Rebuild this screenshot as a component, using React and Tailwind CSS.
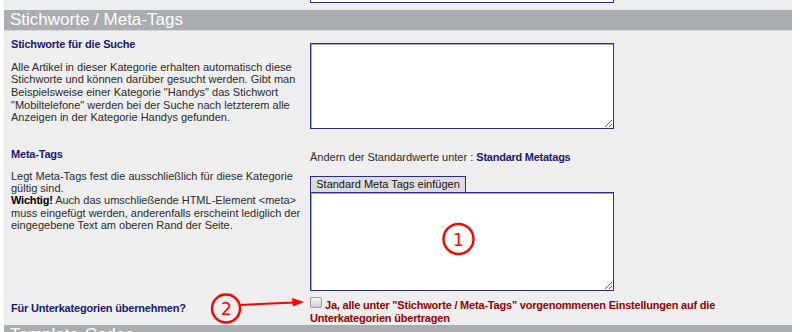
import React from 'react'

function SectionBar({ title }) {
  return (
    <div className="h-[21px] border-b border-[#d6d8d9] bg-[#aaadaf] pl-[6px] text-[17px] leading-[20px] text-white">
      {title}
    </div>
  )
}

function Field({ className }) {
  return (
    <textarea
      readOnly
      className={
        'block resize-y border border-[#2e2e86] bg-white shadow-[inset_1px_1px_0_#a3a3d6] outline-none ' +
        className
      }
    />
  )
}

export default function App() {
  return (
    <div className="relative h-[332px] w-[800px] overflow-hidden bg-white font-['Liberation_Sans',Arial,sans-serif] text-[11px] leading-[1.15] text-[#2b2b2b]">
      <div className="ml-[4px] w-[788px] bg-[#eeeeee]">
        {/* end of the previous section */}
        <div className="h-[10px]">
          <div className="ml-[306px] h-[3px] w-[304px] border-x border-b border-[#2e2e86] bg-white" />
        </div>

        <SectionBar title="Stichworte / Meta-Tags" />

        {/* keywords */}
        <div className="flex">
          <div className="w-[306px] pl-[7px] pr-[2px] pt-[7px]">
            <h3 className="font-bold tracking-[-0.2px] text-[#1a1a6e]">
              Stichworte für die Suche
            </h3>
            <p className="mt-[10px]">
              Alle Artikel in dieser Kategorie erhalten automatisch diese
              Stichworte und können darüber gesucht werden. Gibt man
              Beispielsweise einer Kategorie "Handys" das Stichwort
              "Mobiltelefone" werden bei der Suche nach letzterem alle Anzeigen
              in der Kategorie Handys gefunden.
            </p>
          </div>
          <div className="pt-[12px]">
            <Field className="h-[86px] w-[304px]" />
          </div>
        </div>

        {/* meta tags */}
        <div className="flex">
          <div className="w-[306px] pl-[7px] pr-[2px] pt-[19px]">
            <h3 className="font-bold tracking-[-0.2px] text-[#1a1a6e]">Meta-Tags</h3>
            <p className="mt-[9px] leading-[12.4px]">
              Legt Meta-Tags fest die ausschließlich für diese Kategorie gültig
              sind.
              <br />
              <b className="tracking-[-0.2px] text-black">Wichtig!</b> Auch das
              umschließende HTML-Element &lt;meta&gt; muss eingefügt werden,
              anderenfalls erscheint lediglich der eingegebene Text am oberen
              Rand der Seite.
            </p>
          </div>
          <div className="pt-[22px]">
            <p>
              Ändern der Standardwerte unter :{' '}
              <b className="tracking-[-0.25px] text-[#1a1a6e]">Standard Metatags</b>
            </p>
            <button className="mt-[12px] block h-[17px] w-[156px] border border-[#2e2e86] bg-[#dddddd] text-[11px] leading-[15px] text-[#111]">
              Standard Meta Tags einfügen
            </button>
            <Field className="-mt-px h-[99px] w-[304px]" />
          </div>
        </div>

        {/* apply to subcategories */}
        <div className="flex h-[34px]">
          <div className="flex w-[306px] items-center pl-[7px] pt-[1px] font-bold tracking-[-0.2px] text-[#1a1a6e]">
            Für Unterkategorien übernehmen?
          </div>
          <p className="w-[470px] pt-[6px] font-bold leading-[13.5px] tracking-[-0.2px] text-[#990000]">
            <span className="mr-[3px] inline-block h-[11px] w-[12px] rounded-[2px] border border-[#9c9c9c] bg-gradient-to-b from-[#f6f6f6] to-[#cfcfcf] align-[1px]" />
            Ja, alle unter "Stichworte / Meta-Tags" vorgenommenen Einstellungen
            auf die Unterkategorien übertragen
          </p>
        </div>

        <SectionBar title="Template-Codes" />
      </div>

      {/* annotations */}
      <svg
        className="pointer-events-none absolute inset-0"
        width="800"
        height="332"
        viewBox="0 0 800 332"
      >
        <circle cx="458.5" cy="239" r="15" fill="none" stroke="#f00" strokeWidth="2.4" />
        <text
          x="458.5"
          y="245.5"
          textAnchor="middle"
          fill="#f00"
          fontSize="17"
          fontFamily="'DejaVu Sans', sans-serif"
        >
          1
        </text>
        <circle cx="226" cy="308.5" r="14" fill="none" stroke="#f00" strokeWidth="2.4" />
        <text
          x="226.5"
          y="315"
          textAnchor="middle"
          fill="#f00"
          fontSize="17"
          fontFamily="'DejaVu Sans', sans-serif"
        >
          2
        </text>
        <line x1="240" y1="305" x2="295" y2="302.5" stroke="#f00" strokeWidth="2" />
        <polygon points="304,302 292,298 293,306.5" fill="#f00" />
      </svg>
    </div>
  )
}
